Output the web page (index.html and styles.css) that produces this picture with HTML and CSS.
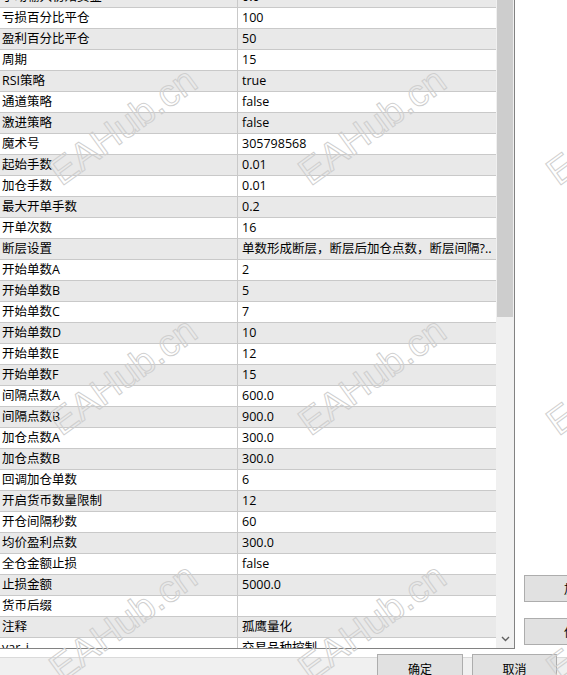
FILE: index.html
```html
<!DOCTYPE html>
<html lang="zh-CN">
<head>
<meta charset="utf-8">
<title>输入参数</title>
<link rel="stylesheet" href="styles.css">
</head>
<body>
<div class="dialog">
  <div class="props">
    <div class="rows">
      <div class="rows-inner">
        <div class="row"><div class="key">手动输入初始资金</div><div class="val">0.0</div></div>
        <div class="row"><div class="key">亏损百分比平仓</div><div class="val">100</div></div>
        <div class="row"><div class="key">盈利百分比平仓</div><div class="val">50</div></div>
        <div class="row"><div class="key">周期</div><div class="val">15</div></div>
        <div class="row"><div class="key">RSI策略</div><div class="val">true</div></div>
        <div class="row"><div class="key">通道策略</div><div class="val">false</div></div>
        <div class="row"><div class="key">激进策略</div><div class="val">false</div></div>
        <div class="row"><div class="key">魔术号</div><div class="val">305798568</div></div>
        <div class="row"><div class="key">起始手数</div><div class="val">0.01</div></div>
        <div class="row"><div class="key">加仓手数</div><div class="val">0.01</div></div>
        <div class="row"><div class="key">最大开单手数</div><div class="val">0.2</div></div>
        <div class="row"><div class="key">开单次数</div><div class="val">16</div></div>
        <div class="row"><div class="key">断层设置</div><div class="val">单数形成断层，断层后加仓点数，断层间隔?..</div></div>
        <div class="row"><div class="key">开始单数A</div><div class="val">2</div></div>
        <div class="row"><div class="key">开始单数B</div><div class="val">5</div></div>
        <div class="row"><div class="key">开始单数C</div><div class="val">7</div></div>
        <div class="row"><div class="key">开始单数D</div><div class="val">10</div></div>
        <div class="row"><div class="key">开始单数E</div><div class="val">12</div></div>
        <div class="row"><div class="key">开始单数F</div><div class="val">15</div></div>
        <div class="row"><div class="key">间隔点数A</div><div class="val">600.0</div></div>
        <div class="row"><div class="key">间隔点数B</div><div class="val">900.0</div></div>
        <div class="row"><div class="key">加仓点数A</div><div class="val">300.0</div></div>
        <div class="row"><div class="key">加仓点数B</div><div class="val">300.0</div></div>
        <div class="row"><div class="key">回调加仓单数</div><div class="val">6</div></div>
        <div class="row"><div class="key">开启货币数量限制</div><div class="val">12</div></div>
        <div class="row"><div class="key">开仓间隔秒数</div><div class="val">60</div></div>
        <div class="row"><div class="key">均价盈利点数</div><div class="val">300.0</div></div>
        <div class="row"><div class="key">全仓金额止损</div><div class="val">false</div></div>
        <div class="row"><div class="key">止损金额</div><div class="val">5000.0</div></div>
        <div class="row"><div class="key">货币后缀</div><div class="val"></div></div>
        <div class="row"><div class="key">注释</div><div class="val">孤鹰量化</div></div>
        <div class="row"><div class="key">var_i</div><div class="val">交易品种控制</div></div>
      </div>
    </div>
    <div class="vscroll">
      <div class="thumb"></div>
      <div class="track-fill"></div>
      <div class="arrow-down">
        <svg width="9" height="6" viewBox="0 0 9 6"><path d="M1 1l3.5 3.5L8 1" fill="none" stroke="#606060" stroke-width="1.4"/></svg>
      </div>
    </div>
  </div>
  <div class="side">
    <div class="side-btn">加载</div>
    <div class="side-btn">保存</div>
  </div>
  <div class="footer">
    <div class="btn btn-ok">确定</div>
    <div class="btn btn-cancel">取消</div>
  </div>
</div>

<div class="wm-layer">
  <span class="wm c1 r1">EAHub.cn</span>
  <span class="wm c2 r1">EAHub.cn</span>
  <span class="wm c3 r1">EAHub.cn</span>
  <span class="wm c1 r2">EAHub.cn</span>
  <span class="wm c2 r2">EAHub.cn</span>
  <span class="wm c3 r2">EAHub.cn</span>
  <span class="wm c1 r3">EAHub.cn</span>
  <span class="wm c2 r3">EAHub.cn</span>
  <span class="wm c3 r3">EAHub.cn</span>
</div>
</body>
</html>
```
FILE: styles.css
```css
html, body {
  margin: 0;
  padding: 0;
}

body {
  width: 567px;
  height: 675px;
  overflow: hidden;
  position: relative;
  background: #fff;
  color: #000;
  font-family: "Open Sans", "Noto Sans CJK SC", sans-serif;
  font-size: 12.5px;
}

.dialog {
  display: grid;
  grid-template-columns: 515px 52px;
  grid-template-rows: 649px 26px;
}

/* property grid with its scrollbar */
.props {
  display: flex;
  border-right: 1px solid #828282;
  border-bottom: 1px solid #828282;
  overflow: hidden;
}

.rows {
  width: 496px;
  flex: none;
  overflow: hidden;
}

.rows-inner {
  margin-top: -13px;
}

.row {
  display: grid;
  grid-template-columns: 237px 1fr;
  height: 21px;
  box-sizing: border-box;
  border-bottom: 1px solid #c9c9c9;
  line-height: 20px;
  background: #fff;
}

.row:nth-child(odd) {
  background: #e9e9e9;
}

.key {
  padding-left: 2px;
  white-space: nowrap;
  overflow: hidden;
}

.val {
  border-left: 1px solid #c9c9c9;
  padding-left: 4px;
  white-space: nowrap;
  overflow: hidden;
}

.vscroll {
  width: 18px;
  flex: none;
  background: #f0f0f0;
  display: flex;
  flex-direction: column;
}

.thumb {
  height: 317px;
  margin: 0 1px;
  background: #cdcdcd;
}

.track-fill {
  flex: 1;
}

.arrow-down {
  height: 18px;
  display: flex;
  align-items: center;
  justify-content: center;
}

.arrow-down svg {
  display: block;
}

/* load / save buttons on the right */
.side {
  display: flex;
  flex-direction: column;
  justify-content: flex-end;
  align-items: flex-start;
  gap: 16px;
  padding: 0 0 4px 9px;
}

.side-btn {
  width: 70px;
  height: 27px;
  flex: none;
  box-sizing: border-box;
  border: 1px solid #adadad;
  background: #e1e1e1;
  padding-left: 39px;
  line-height: 25px;
  font-family: "Noto Sans CJK SC", sans-serif;
  font-size: 12px;
  white-space: nowrap;
  overflow: hidden;
}

/* button bar */
.footer {
  grid-column: 1 / -1;
  display: flex;
  justify-content: flex-end;
  align-items: flex-start;
  gap: 9px;
  padding: 5px 10px 0 0;
  background: linear-gradient(#fff 0 8px, #dadada 8px 9px, #f0f0f0 9px);
}

.btn {
  height: 30px;
  flex: none;
  box-sizing: border-box;
  border: 1px solid #adadad;
  background: #e1e1e1;
  text-align: center;
  line-height: 27px;
  font-family: "Noto Sans CJK SC", sans-serif;
  font-size: 12px;
}

.btn-ok {
  width: 86px;
}

.btn-cancel {
  width: 85px;
}

/* outlined site stamp repeated over the page */
.wm-layer {
  position: absolute;
  inset: 0;
  pointer-events: none;
  overflow: hidden;
}

.wm {
  position: absolute;
  font-family: "Liberation Sans", sans-serif;
  font-size: 38px;
  line-height: 1;
  white-space: nowrap;
  color: transparent;
  -webkit-text-stroke: 1px #cfcfcf;
  transform: translate(-50%, -50%) rotate(-36deg);
}

.c1 { left: 123px; }
.c2 { left: 372px; }
.c3 { left: 620px; }
.r1 { top: 126px; }
.r2 { top: 376px; }
.r3 { top: 622px; }
```
